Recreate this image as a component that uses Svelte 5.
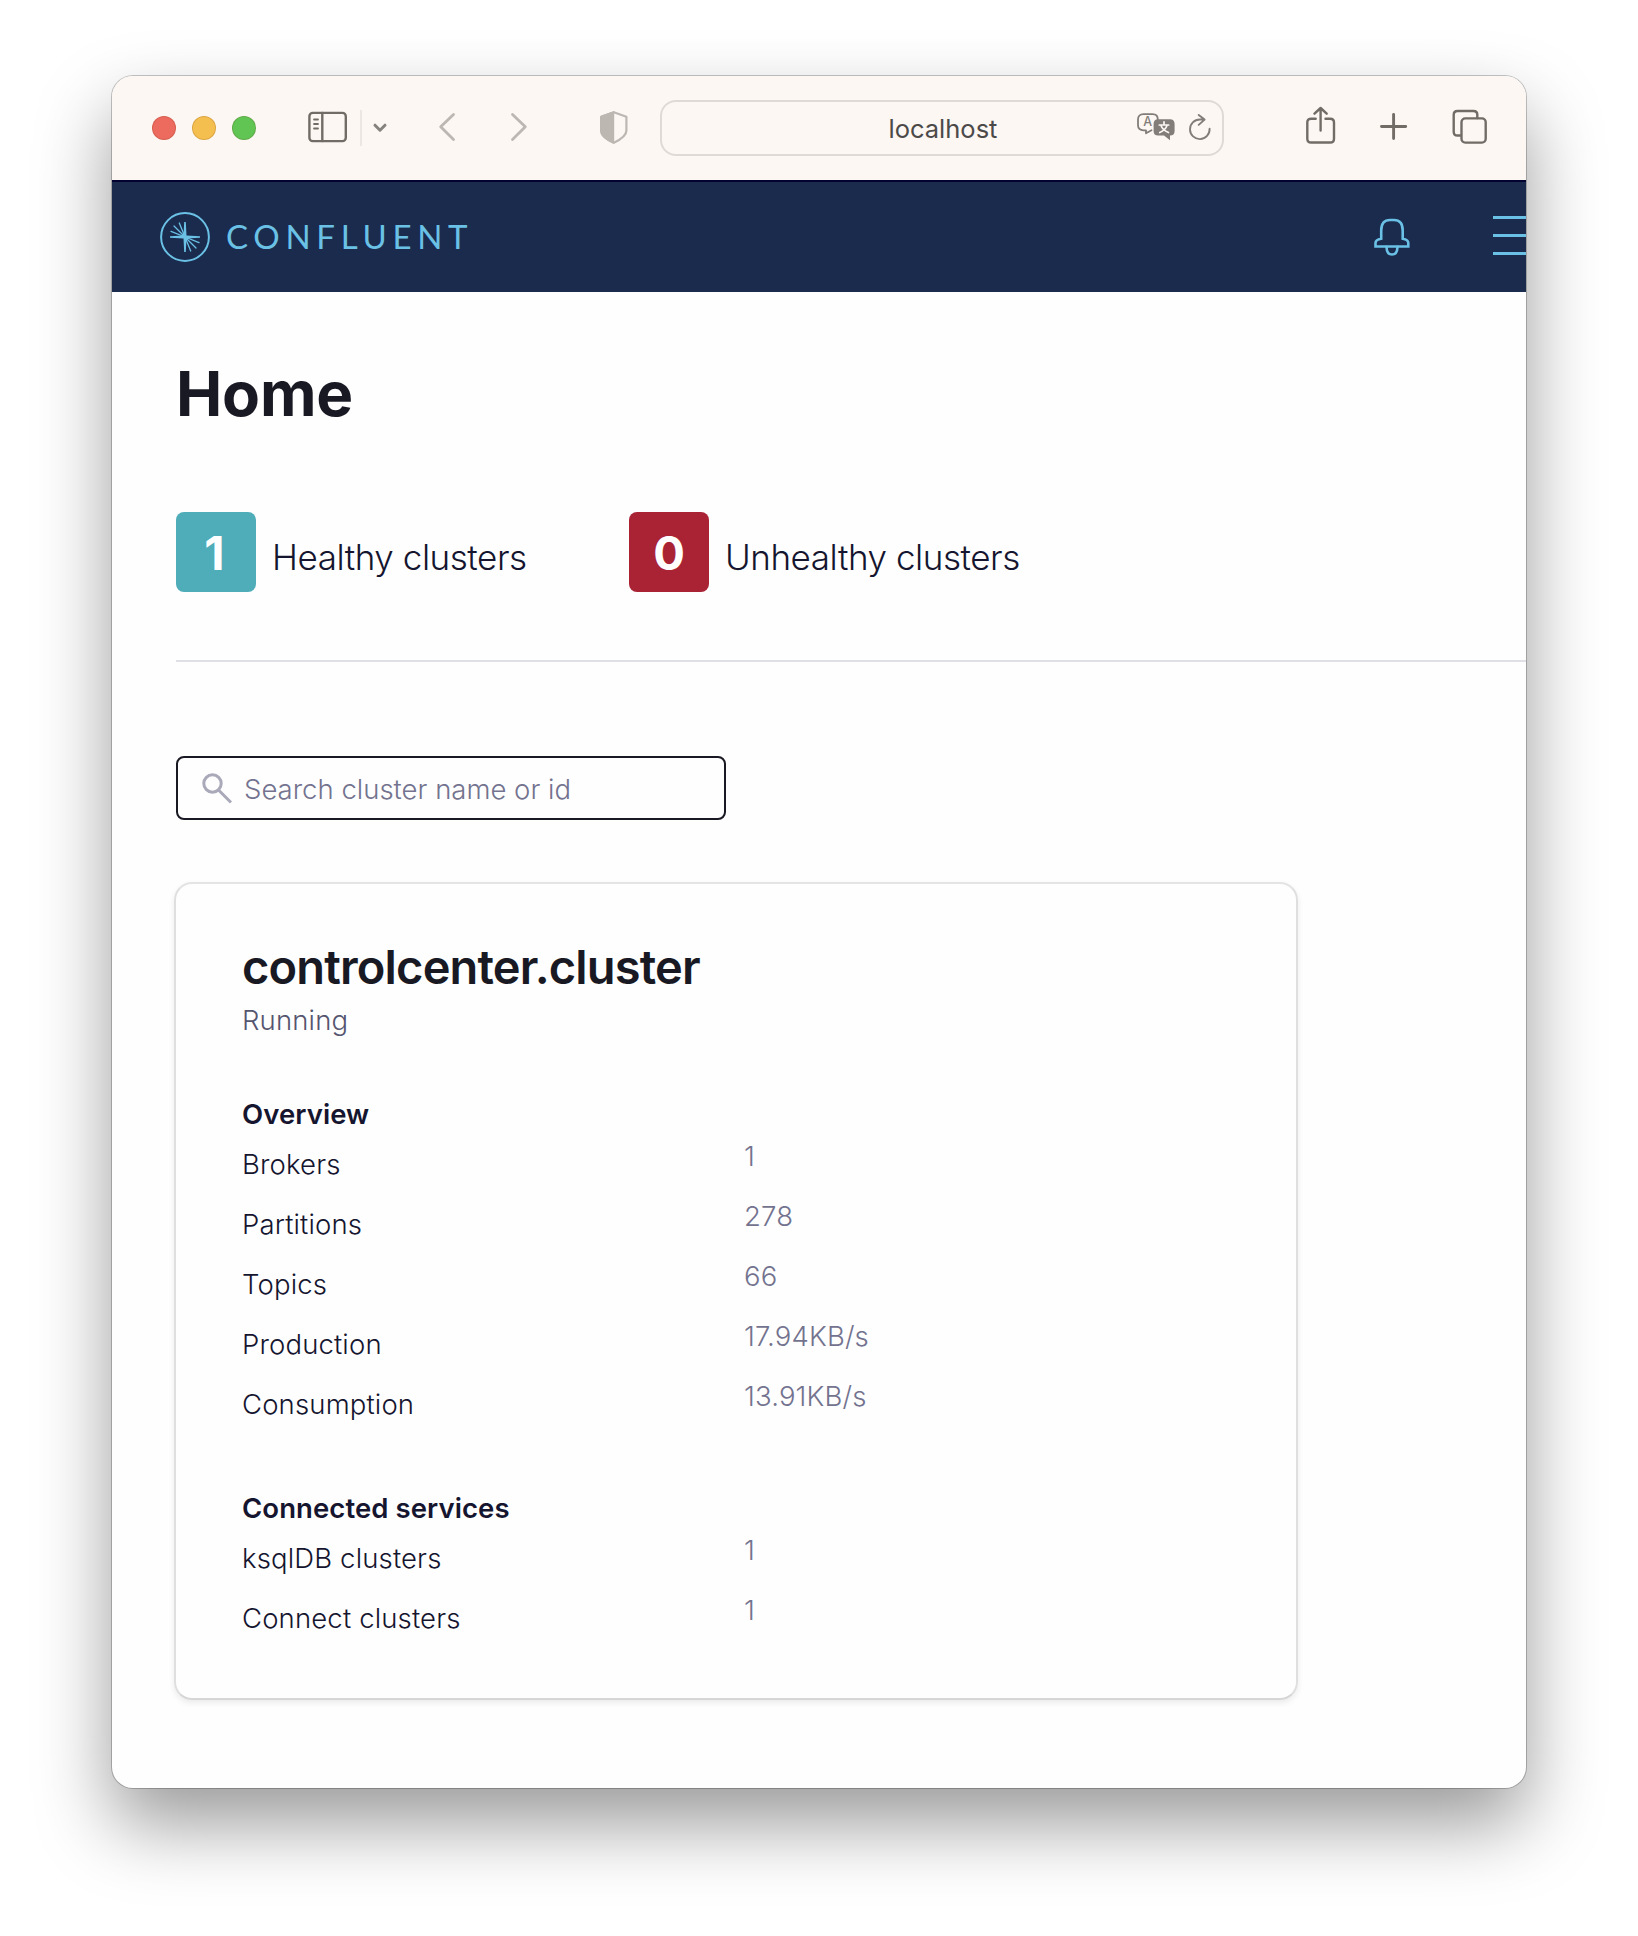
<script>
  const stats = [
    { count: 1, label: 'Healthy clusters', tone: 'good' },
    { count: 0, label: 'Unhealthy clusters', tone: 'bad' }
  ];

  const sections = [
    {
      title: 'Overview',
      rows: [
        ['Brokers', '1'],
        ['Partitions', '278'],
        ['Topics', '66'],
        ['Production', '17.94KB/s'],
        ['Consumption', '13.91KB/s']
      ]
    },
    {
      title: 'Connected services',
      rows: [
        ['ksqlDB clusters', '1'],
        ['Connect clusters', '1']
      ]
    }
  ];
</script>

<div class="desktop">
  <div class="window">
    <div class="toolbar">
      <div class="lights"><i class="red"></i><i class="yellow"></i><i class="green"></i></div>

      <svg class="sidebar" width="40" height="44" viewBox="0 0 40 44">
        <rect x="1.4" y="6.9" width="36.4" height="28.2" rx="3.4" />
        <path d="M14.3 7v28" />
        <path class="thin" d="M6 13.5h4M6 18h4M6 22.5h4" />
      </svg>
      <span class="rule"></span>
      <svg class="chevron" width="16" height="44" viewBox="0 0 16 44"><path d="M3 19.2l5 5 5-5" /></svg>
      <svg class="back" width="18" height="44" viewBox="0 0 18 44"><path d="M15.5 8.5L2.7 20.8l12.8 12.6" /></svg>
      <svg class="forward" width="18" height="44" viewBox="0 0 18 44"><path d="M2.5 8.5l12.8 12.3L2.5 33.4" /></svg>
      <svg class="shield" width="28" height="44" viewBox="0 0 28 44">
        <path class="outline" d="M13.8 6.2L26.4 10.8V24.5c0 5.5-6.500 9.400-12.600 12.200C7.700 33.900 1.200 30 1.200 24.500V10.800z" />
        <path class="half" d="M14.200 5L1.500 9.500Q0 10 0 11.500V24.500C0 31 7 35 14.200 38z" />
      </svg>

      <div class="address">
        <span class="host">localhost</span>
        <svg class="tools" width="40" height="32" viewBox="0 0 40 32">
          <path class="line" d="M15.500 18.300L10 21.300V18.300H7.500Q2 18.300 2 13V7.500Q2 2.200 7.500 2.200H16.500Q21.800 2.200 21.800 7.500" />
          <text class="latin" x="11.700" y="14.300">A</text>
          <path class="bubble" d="M22 7.200H34Q38.600 7.200 38.600 12V19Q38.600 23.500 34 23.500V28.300L28 23.500H22Q17.600 23.500 17.600 19V12Q17.600 7.200 22 7.200z" />
          <path class="glyph" d="M28 9.800v2.500M23.300 13h9.400M31 13.500Q29.500 18 23.700 20.500M25 13.500Q26.500 18 32.500 20.500" />
        </svg>
        <svg class="refresh" width="24" height="32" viewBox="0 0 24 32">
          <path d="M21.600 16.800A9.800 9.800 0 1 1 11.800 7.500H16.500M10.700 2.900L16.600 7.600L10.700 12.900" />
        </svg>
      </div>

      <svg class="share" width="30" height="44" viewBox="0 0 30 44">
        <path d="M9.700 12.700H5.200Q1.300 12.700 1.300 16.500V32.700Q1.300 36.500 5.200 36.500H24.200Q28 36.500 28 32.700V16.500Q28 12.700 24.200 12.700H19.500" />
        <path d="M14.600 24.500V2.500M8.500 7.700l6.100-5.700 6.100 5.700" />
      </svg>
      <svg class="plus" width="28" height="44" viewBox="0 0 28 44"><path d="M1.500 20.500h24.200M13.600 8.400v24.200" /></svg>
      <svg class="tabs" width="36" height="44" viewBox="0 0 36 44">
        <path d="M8.500 29.500H5.500Q1.700 29.500 1.700 25.700V8.800Q1.700 5 5.500 5H21.500Q25.300 5 25.300 8.800V12" />
        <rect x="9.500" y="12.400" width="24.200" height="24.200" rx="3.800" />
      </svg>
    </div>

    <header>
      <svg class="mark" width="50" height="50" viewBox="0 0 50 50">
        <circle cx="25" cy="25" r="23.900" />
        <path d="M25 25L11 19.300M25 25L14 14M25 25L19.300 11M25 25L39 30.700M25 25L36 36M25 25L30.700 39" />
        <path class="solid" d="M10 24.200L23.500 23.500L24.200 10H25.800L26.500 23.500L40 24.200V25.800L26.500 26.500L25.800 40H24.200L23.500 26.500L10 25.800z" />
      </svg>
      <span class="wordmark">CONFLUENT</span>
      <svg class="bell" width="38" height="40" viewBox="0 0 38 40">
        <path d="M2.500 29.500V26Q2.500 22.600 8.200 21.700V13.500Q8.200 3 17 3H21Q29.700 3 29.700 13.500V21.700Q35.300 22.600 35.300 26V29.500z" />
        <path d="M13.500 29.700Q13.700 37.500 19 37.500T24.500 29.700" />
      </svg>
      <div class="menu"><i></i><i></i><i></i></div>
    </header>

    <main>
      <h1>Home</h1>
      <div class="stats">
        {#each stats as stat}
          <div class="stat {stat.tone}"><b>{stat.count}</b><span>{stat.label}</span></div>
        {/each}
      </div>
      <div class="divider"></div>

      <label class="search">
        <svg width="32" height="32" viewBox="0 0 32 32"><circle cx="11.500" cy="11.500" r="8.700" /><path d="M17.500 18L30 30.500" /></svg>
        <span>Search cluster name or id</span>
      </label>

      <section class="card">
        <h2>controlcenter.cluster</h2>
        <p>Running</p>
        {#each sections as section}
          <h3>{section.title}</h3>
          <dl>
            {#each section.rows as [name, value]}
              <dt>{name}</dt>
              <dd>{value}</dd>
            {/each}
          </dl>
        {/each}
      </section>
    </main>
  </div>
</div>

<style>
  :global(body) {
    background: #fff;
  }
  .desktop {
    box-sizing: border-box;
    width: 1638px;
    height: 1936px;
    padding: 76px 112px 0;
    overflow: hidden;
    font-family: Inter, 'Liberation Sans', sans-serif;
  }
  .window {
    width: 1414px;
    height: 1712px;
    border-radius: 21px;
    background: #fefefe;
    overflow: hidden;
    box-shadow:
      0 0 0 1px rgba(0, 0, 0, 0.22),
      0 36px 76px rgba(0, 0, 0, 0.4);
  }
  svg {
    display: block;
    flex: none;
    fill: none;
    stroke-linecap: round;
    stroke-linejoin: round;
  }

  .toolbar {
    box-sizing: border-box;
    height: 104px;
    padding-left: 40px;
    display: flex;
    align-items: center;
    background: #fcf7f3;
    stroke: #726c67;
    stroke-width: 2.4;
  }
  .lights {
    display: flex;
    gap: 16px;
  }
  .lights i {
    box-sizing: border-box;
    width: 24px;
    height: 24px;
    border-radius: 50%;
    border: 1px solid rgba(90, 30, 0, 0.16);
  }
  .red {
    background: #ed6a5e;
  }
  .yellow {
    background: #f5bf4f;
  }
  .green {
    background: #61c554;
  }
  .sidebar {
    margin-left: 52px;
  }
  .thin {
    stroke-width: 1.8;
  }
  .rule {
    width: 2px;
    height: 36px;
    margin-left: 12px;
    background: #ece7e3;
  }
  .chevron {
    margin-left: 10px;
    stroke: #86827e;
    stroke-width: 3;
  }
  .back,
  .forward {
    stroke: #bdb7b2;
    stroke-width: 2.8;
  }
  .back {
    margin-left: 50px;
  }
  .forward {
    margin-left: 54px;
  }
  .shield {
    margin-left: 72px;
  }
  .outline {
    stroke: #bdb7b2;
    stroke-width: 2.2;
  }
  .half {
    fill: #bdb7b2;
    stroke: none;
  }
  .address {
    box-sizing: border-box;
    width: 564px;
    height: 56px;
    margin-left: 32px;
    border: 2px solid #dfdad6;
    border-radius: 16px;
    display: flex;
    align-items: center;
  }
  .host {
    width: 107px;
    margin-left: 226.5px;
    padding-top: 2px;
    font-size: 25.5px;
    line-height: 50px;
    color: #4c4a49;
    white-space: nowrap;
  }
  .tools {
    margin-left: 140px;
  }
  .line {
    stroke: #827d79;
    stroke-width: 1.8;
  }
  .latin {
    fill: #827d79;
    stroke: none;
    font: 500 12.5px Inter, sans-serif;
    text-anchor: middle;
  }
  .bubble {
    fill: #827d79;
    stroke: none;
  }
  .glyph {
    stroke: #fcf7f3;
    stroke-width: 1.7;
  }
  .refresh {
    margin-left: 12px;
    stroke: #827d79;
    stroke-width: 1.9;
  }
  .share {
    margin-left: 82px;
  }
  .plus {
    margin-left: 44px;
    stroke-width: 2.9;
  }
  .tabs {
    margin-left: 44px;
  }

  header {
    box-sizing: border-box;
    height: 112px;
    border-top: 2px solid #020330;
    padding-left: 48px;
    display: flex;
    align-items: center;
    background: #1a2b4e;
    stroke: #6ac1e5;
    color: #6ac1e5;
  }
  .mark {
    stroke-width: 2;
  }
  .mark path {
    stroke-width: 1.3;
  }
  .mark .solid {
    fill: #6ac1e5;
    stroke: none;
  }
  .wordmark {
    flex: none;
    width: 1147px;
    margin-left: 16px;
    padding-bottom: 2px;
    font-family: Lato, sans-serif;
    font-size: 33px;
    line-height: 40px;
    letter-spacing: 5.7px;
  }
  .bell {
    stroke-width: 2.6;
    stroke-linejoin: miter;
  }
  .menu {
    flex: none;
    margin: -3px 0 0 82px;
    display: grid;
    gap: 15px;
  }
  .menu i {
    width: 48px;
    height: 3px;
    background: #6ac1e5;
  }

  main {
    padding: 70px 0 0 64px;
  }
  h1,
  h2,
  h3,
  p,
  dl,
  dd {
    margin: 0;
  }
  h1 {
    font-size: 62px;
    line-height: 64px;
    font-weight: 700;
    letter-spacing: -0.2px;
    color: #191924;
  }
  .stats {
    display: flex;
    margin-top: 86px;
  }
  .stat {
    display: flex;
    width: 453px;
    height: 80px;
  }
  .stat b {
    box-sizing: border-box;
    width: 80px;
    height: 80px;
    border-radius: 8px;
    font-size: 47px;
    line-height: 82px;
    text-align: center;
    color: #fff;
  }
  .good b {
    padding-right: 3px;
    background: #4facb9;
  }
  .bad b {
    background: #aa2335;
  }
  .stat span {
    margin: 5px 0 0 16px;
    font-size: 35px;
    line-height: 80px;
    font-weight: 300;
    letter-spacing: -0.45px;
    color: #15152f;
    white-space: nowrap;
  }
  .divider {
    height: 2px;
    margin-top: 68px;
    background: #dfdfe6;
  }
  .search {
    box-sizing: border-box;
    width: 550px;
    height: 64px;
    margin-top: 94px;
    padding-left: 23px;
    border: 2px solid #191924;
    border-radius: 8px;
    display: flex;
    align-items: center;
    font-size: 27.5px;
    font-weight: 300;
    color: #73738f;
  }
  .search svg {
    stroke: #a9a9ba;
    stroke-width: 3;
    stroke-linecap: butt;
  }
  .search span {
    margin-left: 11px;
    padding-top: 2px;
  }
  .card {
    box-sizing: border-box;
    width: 1124px;
    height: 818px;
    margin: 62px 0 0 -2px;
    padding: 55px 0 0 66px;
    border: 2px solid #dfdfdf;
    border-top-color: #e4e4e4;
    border-bottom-color: #d6d6d6;
    border-radius: 18px;
    box-shadow: 0 3px 6px rgba(0, 0, 0, 0.08);
  }
  h2 {
    font-size: 47px;
    line-height: 56px;
    font-weight: 600;
    letter-spacing: -0.83px;
    color: #191924;
  }
  p {
    margin-top: 7px;
    font-size: 27.5px;
    line-height: 36px;
    font-weight: 300;
    letter-spacing: 0.15px;
    color: #55556f;
  }
  h3 {
    margin: 58px 0 6px;
    font-size: 27.5px;
    line-height: 36px;
    font-weight: 600;
    letter-spacing: 0.08px;
    color: #15152f;
  }
  dl + h3 {
    margin-top: 52px;
  }
  dl {
    display: grid;
    grid-template-columns: 502px 1fr;
    grid-auto-rows: 60px;
    font-size: 27.5px;
    line-height: 36px;
    font-weight: 300;
    letter-spacing: 0.15px;
  }
  dt {
    padding-top: 8px;
    color: #15152f;
  }
  dd {
    color: #73738f;
  }
</style>
